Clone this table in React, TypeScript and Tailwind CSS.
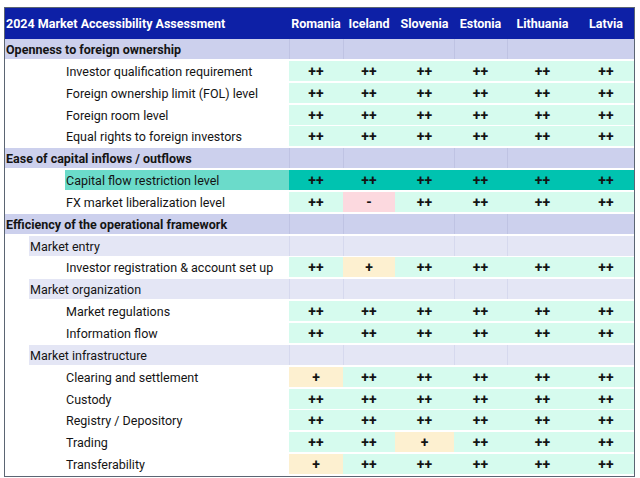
import React from 'react';

type Row =
  | { kind: 'section'; label: string }
  | { kind: 'sub'; label: string }
  | { kind: 'item'; label: string; values: string[]; highlight?: boolean };

const countries = ['Romania', 'Iceland', 'Slovenia', 'Estonia', 'Lithuania', 'Latvia'];
const all = ['++', '++', '++', '++', '++', '++'];

const rows: Row[] = [
  { kind: 'section', label: 'Openness to foreign ownership' },
  { kind: 'item', label: 'Investor qualification requirement', values: all },
  { kind: 'item', label: 'Foreign ownership limit (FOL) level', values: all },
  { kind: 'item', label: 'Foreign room level', values: all },
  { kind: 'item', label: 'Equal rights to foreign investors', values: all },
  { kind: 'section', label: 'Ease of capital inflows / outflows' },
  { kind: 'item', label: 'Capital flow restriction level', values: all, highlight: true },
  { kind: 'item', label: 'FX market liberalization level', values: ['++', '-', '++', '++', '++', '++'] },
  { kind: 'section', label: 'Efficiency of the operational framework' },
  { kind: 'sub', label: 'Market entry' },
  { kind: 'item', label: 'Investor registration & account set up', values: ['++', '+', '++', '++', '++', '++'] },
  { kind: 'sub', label: 'Market organization' },
  { kind: 'item', label: 'Market regulations', values: all },
  { kind: 'item', label: 'Information flow', values: all },
  { kind: 'sub', label: 'Market infrastructure' },
  { kind: 'item', label: 'Clearing and settlement', values: ['+', '++', '++', '++', '++', '++'] },
  { kind: 'item', label: 'Custody', values: all },
  { kind: 'item', label: 'Registry / Depository', values: all },
  { kind: 'item', label: 'Trading', values: ['++', '++', '+', '++', '++', '++'] },
  { kind: 'item', label: 'Transferability', values: ['+', '++', '++', '++', '++', '++'] },
];

const grid = 'grid grid-cols-[284px_54px_52px_59px_53px_71px_56px]';

// subtle column separators seen in the grouped rows
const divided = [true, true, false, true, true, false];

const cellColor = (v: string, highlight?: boolean) => {
  if (highlight) return 'bg-[#00c3b0]';
  if (v === '-') return 'bg-[#fcd9df]';
  if (v === '+') return 'bg-[#fdf0d0]';
  return 'bg-[#d6fbee]';
};

const App = () => {
  return (
    <div className="w-[640px] h-[478px] bg-white pt-[7px] pl-[4px] font-['Roboto','Liberation_Sans',sans-serif] text-[12.5px] text-[#141414]">
      <div className="w-[631px] border border-[#5b6573]">
        <div className={`${grid} h-[31px] bg-[#0d20a6] text-white font-bold items-center pt-[1px]`}>
          <div className="pl-[1px]">2024 Market Accessibility Assessment</div>
          {countries.map((c) => (
            <div key={c} className="text-center">{c}</div>
          ))}
        </div>

        {rows.map((row, i) => {
          if (row.kind === 'section') {
            return (
              <div key={i} className={`${grid} h-[21.85px] pb-[2px]`}>
                <div className="bg-[#ccd0ed] font-bold pl-[1px] pt-[1px] leading-[19px]">{row.label}</div>
                {countries.map((c, j) => (
                  <div key={c} className={`bg-[#ccd0ed] ${divided[j] ? 'border-l border-[#bfc3e3]' : ''}`} />
                ))}
              </div>
            );
          }
          if (row.kind === 'sub') {
            return (
              <div key={i} className={`${grid} h-[21.85px] pb-[2px]`}>
                <div className="pl-[24px]">
                  <div className="bg-[#e4e6f5] h-full pl-[1px] pt-[1px] leading-[19px]">{row.label}</div>
                </div>
                {countries.map((c, j) => (
                  <div key={c} className={`bg-[#e4e6f5] ${divided[j] ? 'border-l border-[#d6d9ee]' : ''}`} />
                ))}
              </div>
            );
          }
          return (
            <div key={i} className={`${grid} h-[21.85px] pb-[2px]`}>
              <div className="pl-[60px]">
                <div className={`h-full pl-[1px] pt-[1px] leading-[19px] ${row.highlight ? 'bg-[#6bdbca]' : ''}`}>{row.label}</div>
              </div>
              {row.values.map((v, j) => (
                <div key={j} className={`${cellColor(v, row.highlight)} text-center font-bold text-[14px] pt-[1px] leading-[19px]`}>
                  {v}
                </div>
              ))}
            </div>
          );
        })}
      </div>
    </div>
  );
};

export default App;
